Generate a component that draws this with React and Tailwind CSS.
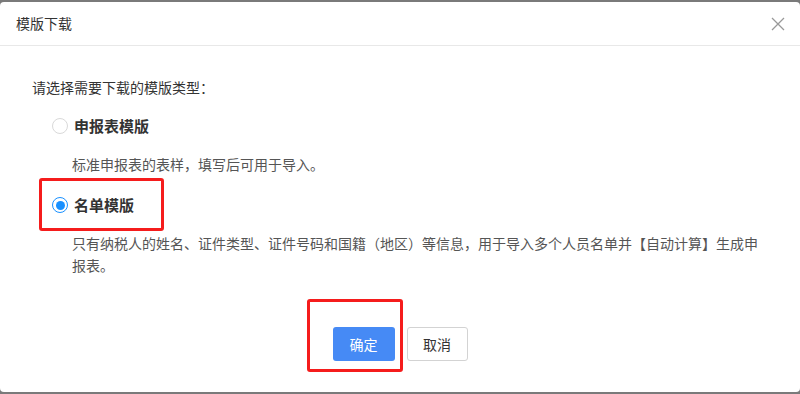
import React, { useState } from 'react';

export default function App() {
  const [tpl, setTpl] = useState('list');

  const options = [
    { id: 'report', label: '申报表模版', desc: '标准申报表的表样，填写后可用于导入。' },
    {
      id: 'list',
      label: '名单模版',
      desc: '只有纳税人的姓名、证件类型、证件号码和国籍（地区）等信息，用于导入多个人员名单并【自动计算】生成申报表。',
    },
  ];

  return (
    <div
      className="h-[394px] w-[800px] overflow-hidden bg-[#7a7a7a] pt-[2px]"
      style={{ fontFamily: '"Noto Sans CJK SC", "Noto Sans", sans-serif' }}
    >
      <div className="relative flex h-[390px] flex-col rounded-[4px] bg-white text-[#333]">
        {/* Header */}
        <div className="flex h-[44px] items-center justify-between border-b border-[#e8e8e8] pl-4 pr-[15px]">
          <span className="text-[14px] text-[#333]">模版下载</span>
          <button className="text-[#999]">
            <svg width="14" height="14" viewBox="0 0 14 14" fill="none" stroke="currentColor" strokeWidth="1.3">
              <path d="M1 1L13 13M13 1L1 13" />
            </svg>
          </button>
        </div>

        {/* Body */}
        <div className="flex flex-1 flex-col px-8 pt-[30px]">
          <p className="text-[14px] leading-[22px] text-[#333]">请选择需要下载的模版类型：</p>
          <div className="mt-[10px] flex flex-col pl-5">
            {options.map((o) => {
              const active = tpl === o.id;
              return (
                <div key={o.id} className="flex flex-col">
                  <label
                    className="flex h-[36px] cursor-pointer items-center gap-[6px]"
                    onClick={() => setTpl(o.id)}
                  >
                    <span
                      className={`flex h-[16px] w-[16px] items-center justify-center rounded-full border bg-white ${
                        active ? 'border-[#1890ff]' : 'border-[#d9d9d9]'
                      }`}
                    >
                      {active && <span className="h-[9px] w-[9px] rounded-full bg-[#1890ff]" />}
                    </span>
                    <span className="text-[15px] font-bold text-[#333]">{o.label}</span>
                  </label>
                  <p className="mt-[9px] mb-[12px] pl-5 text-[14px] leading-[22px] text-[#555]">{o.desc}</p>
                </div>
              );
            })}
          </div>

          {/* Footer */}
          <div className="mt-auto mb-[31px] flex justify-center gap-3">
            <button className="h-[34px] w-[62px] rounded-[3px] bg-[#468af5] text-[14px] text-white">确定</button>
            <button className="h-[34px] w-[61px] rounded-[3px] border border-[#d3d3d3] bg-white text-[14px] text-[#333]">
              取消
            </button>
          </div>
        </div>

        {/* annotation boxes */}
        <div className="pointer-events-none absolute left-[39px] top-[176px] h-[53px] w-[125px] rounded-[3px] border-[3px] border-[#f51c1c]" />
        <div className="pointer-events-none absolute left-[307px] top-[297px] h-[73px] w-[96px] rounded-[3px] border-[3px] border-[#f51c1c]" />
      </div>
    </div>
  );
}
